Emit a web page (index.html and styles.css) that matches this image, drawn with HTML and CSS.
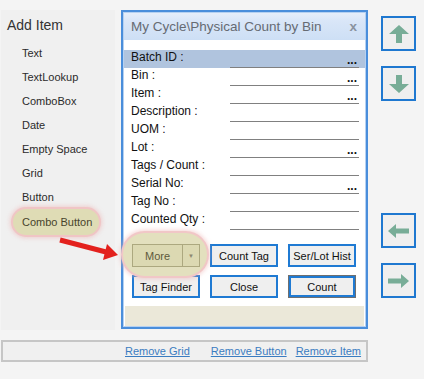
FILE: index.html
```html
<!DOCTYPE html>
<html lang="en">
<head>
  <meta charset="UTF-8">
  <title>Form Designer</title>
  <link rel="stylesheet" href="styles.css">
</head>
<body>
  <div class="workspace">
    <!-- Toolbox -->
    <aside class="toolbox">
      <h2>Add Item</h2>
      <ul class="tool-list">
        <li>Text</li>
        <li>TextLookup</li>
        <li>ComboBox</li>
        <li>Date</li>
        <li>Empty Space</li>
        <li>Grid</li>
        <li>Button</li>
        <li><span class="highlight">Combo Button</span></li>
      </ul>
    </aside>

    <!-- Device preview -->
    <div class="device">
      <div class="device-title">
        <span>My Cycle\Physical Count by Bin</span>
        <span class="close">x</span>
      </div>
      <div class="form">
        <div class="row selected"><label>Batch ID :</label><div class="field">...</div></div>
        <div class="row"><label>Bin :</label><div class="field">...</div></div>
        <div class="row"><label>Item :</label><div class="field">...</div></div>
        <div class="row"><label>Description :</label><div class="field"></div></div>
        <div class="row"><label>UOM :</label><div class="field"></div></div>
        <div class="row"><label>Lot :</label><div class="field">...</div></div>
        <div class="row"><label>Tags / Count :</label><div class="field"></div></div>
        <div class="row"><label>Serial No:</label><div class="field">...</div></div>
        <div class="row"><label>Tag No :</label><div class="field"></div></div>
        <div class="row"><label>Counted Qty :</label><div class="field"></div></div>
      </div>
      <div class="actions">
        <div class="btn-row">
          <div class="combo-wrap">
            <div class="combo">
              <span class="combo-main">More</span>
              <span class="combo-drop">&#9660;</span>
            </div>
          </div>
          <button class="btn">Count Tag</button>
          <button class="btn">Ser/Lot Hist</button>
        </div>
        <div class="btn-row">
          <button class="btn">Tag Finder</button>
          <button class="btn">Close</button>
          <button class="btn default">Count</button>
        </div>
      </div>
      <div class="status"></div>
    </div>

    <!-- Move buttons -->
    <div class="movers">
      <button class="move">
        <svg viewBox="0 0 20 18" width="20" height="18"><polygon points="10,0 20,9 13,9 13,18 7,18 7,9 0,9"/></svg>
      </button>
      <button class="move">
        <svg viewBox="0 0 20 18" width="20" height="18"><polygon points="10,18 20,9 13,9 13,0 7,0 7,9 0,9"/></svg>
      </button>
      <button class="move gap-big">
        <svg viewBox="0 0 21 14" width="21" height="14"><polygon points="0,7 8,0 8,4.5 21,4.5 21,9.5 8,9.5 8,14"/></svg>
      </button>
      <button class="move">
        <svg viewBox="0 0 21 14" width="21" height="14"><polygon points="21,7 13,0 13,4.5 0,4.5 0,9.5 13,9.5 13,14"/></svg>
      </button>
    </div>
  </div>

  <div class="footer-bar">
    <a href="#">Remove Grid</a>
    <a href="#" class="link-2">Remove Button</a>
    <a href="#" class="link-3">Remove Item</a>
  </div>

  <!-- hint arrow from toolbox to the combo button -->
  <svg class="pointer" viewBox="0 0 66 32" width="66" height="32">
    <line x1="4" y1="8" x2="50" y2="20" stroke="#e3211d" stroke-width="5"/>
    <polygon points="51,12 62,23 47,28" fill="#e3211d"/>
  </svg>
</body>
</html>
```

FILE: styles.css
```css
body {
  margin: 0;
  background-color: #f4f4f4;
  font-family: "Liberation Sans", Arial, sans-serif;
  color: #222;
  position: relative;
  width: 424px;
  height: 379px;
  overflow: hidden;
}
.workspace {
  display: flex;
  align-items: flex-start;
  padding: 10px 0 0 1px;
}

/* Toolbox */
.toolbox {
  width: 114px;
  height: 320px;
  margin-right: 6px;
  padding: 5px 0 0 6px;
  box-sizing: border-box;
  background-color: #f0f0f0;
}
.toolbox h2 {
  margin: 0 0 6px 0;
  font-size: 14px;
  font-weight: normal;
  line-height: 20px;
  color: #333;
}
.tool-list {
  list-style: none;
  margin: 0;
  padding: 0 0 0 15px;
}
.tool-list li {
  height: 24px;
  line-height: 24px;
  font-size: 11px;
  color: #2b2b2b;
}
.highlight {
  display: inline-block;
  margin-left: -9px;
  padding: 0 7px 0 9px;
  line-height: 26px;
  border-radius: 14px;
  background-color: #dfdcb5;
  color: #48442c;
  box-shadow: 0 0 0 2px #f0c5c5, 0 0 4px 3px rgba(236, 176, 176, 0.55);
}

/* Device preview */
.device {
  width: 247px;
  box-sizing: border-box;
  margin-right: 13px;
  border: 2px solid #4a8edb;
  padding: 1px;
  background-color: #fff;
  box-shadow: inset 0 0 0 1px #b6d1f1;
}
.device-title {
  height: 27px;
  display: flex;
  align-items: center;
  justify-content: space-between;
  padding: 0 7px;
  background: linear-gradient(#e6eefa, #d9e6f8 30%, #cddff5 100%);
  font-size: 13.5px;
  color: #666b73;
}
.device-title .close {
  font-weight: bold;
  color: #8a929e;
  padding-right: 1px;
}
.form {
  padding-top: 10px;
}
.row {
  display: flex;
  height: 18px;
}
.row.selected {
  background-color: #b0c4de;
}
.row label {
  width: 99px;
  padding-left: 7px;
  font-size: 12px;
  line-height: 15px;
  color: #111;
}
.field {
  width: 129px;
  height: 18px;
  box-sizing: border-box;
  border-bottom: 1px solid #808080;
  padding: 3px 2px 0 0;
  text-align: right;
  font-size: 12px;
  font-weight: bold;
  line-height: 14px;
  color: #111;
}

/* Buttons */
.actions {
  padding: 14px 0 0 8px;
}
.btn-row {
  display: flex;
  gap: 10px;
}
.btn-row + .btn-row {
  margin-top: 8px;
}
.btn {
  width: 68px;
  height: 23px;
  padding: 0;
  border: 2px solid #1f7ad3;
  background-color: #efefef;
  font-family: inherit;
  font-size: 11px;
  color: #111;
}
.btn.default {
  border: 1px solid #6f6f6f;
  box-shadow: inset 0 0 0 2px #1f7ad3;
}
.combo-wrap {
  position: relative;
  z-index: 0;
}
.combo-wrap::before {
  content: "";
  position: absolute;
  top: -11px;
  left: -9px;
  right: -7px;
  bottom: -9px;
  z-index: -1;
  border-radius: 22px;
  background-color: #e3e0be;
  box-shadow: 0 0 0 2px #f1c7c7, 0 0 4px 3px rgba(236, 176, 176, 0.55);
}
.combo {
  display: flex;
  width: 68px;
  height: 23px;
  box-sizing: border-box;
  border: 1px solid #aca87f;
  background-color: #dcd9b2;
  font-size: 11px;
  color: #5e5a3c;
}
.combo-main {
  flex: 1;
  display: flex;
  align-items: center;
  justify-content: center;
}
.combo-drop {
  width: 16px;
  border-left: 1px solid #aca87f;
  display: flex;
  align-items: center;
  justify-content: center;
  font-size: 6px;
  color: #8c8870;
}
.status {
  height: 20px;
  margin: 8px 1px 0 1px;
  background-color: #ebe8d9;
}

/* Move buttons */
.movers {
  display: flex;
  flex-direction: column;
  padding-top: 6px;
}
.move {
  width: 35px;
  height: 35px;
  padding: 0;
  display: flex;
  align-items: center;
  justify-content: center;
  border: 2px solid #1f78d0;
  background-color: #efefef;
}
.move + .move {
  margin-top: 15px;
}
.move.gap-big {
  margin-top: 112px;
}
.move svg {
  fill: #78ad97;
}

/* Footer */
.footer-bar {
  width: 367px;
  height: 22px;
  box-sizing: border-box;
  margin: 10px 0 0 1px;
  padding-left: 122px;
  border: 2px solid #c6c6c6;
  background-color: #f0f0f0;
  display: flex;
  align-items: center;
  font-size: 11px;
}
.footer-bar a {
  color: #3a7cc1;
}
.footer-bar .link-2 {
  margin-left: 21px;
}
.footer-bar .link-3 {
  margin-left: 9px;
}

.pointer {
  position: absolute;
  left: 56px;
  top: 232px;
}
```
